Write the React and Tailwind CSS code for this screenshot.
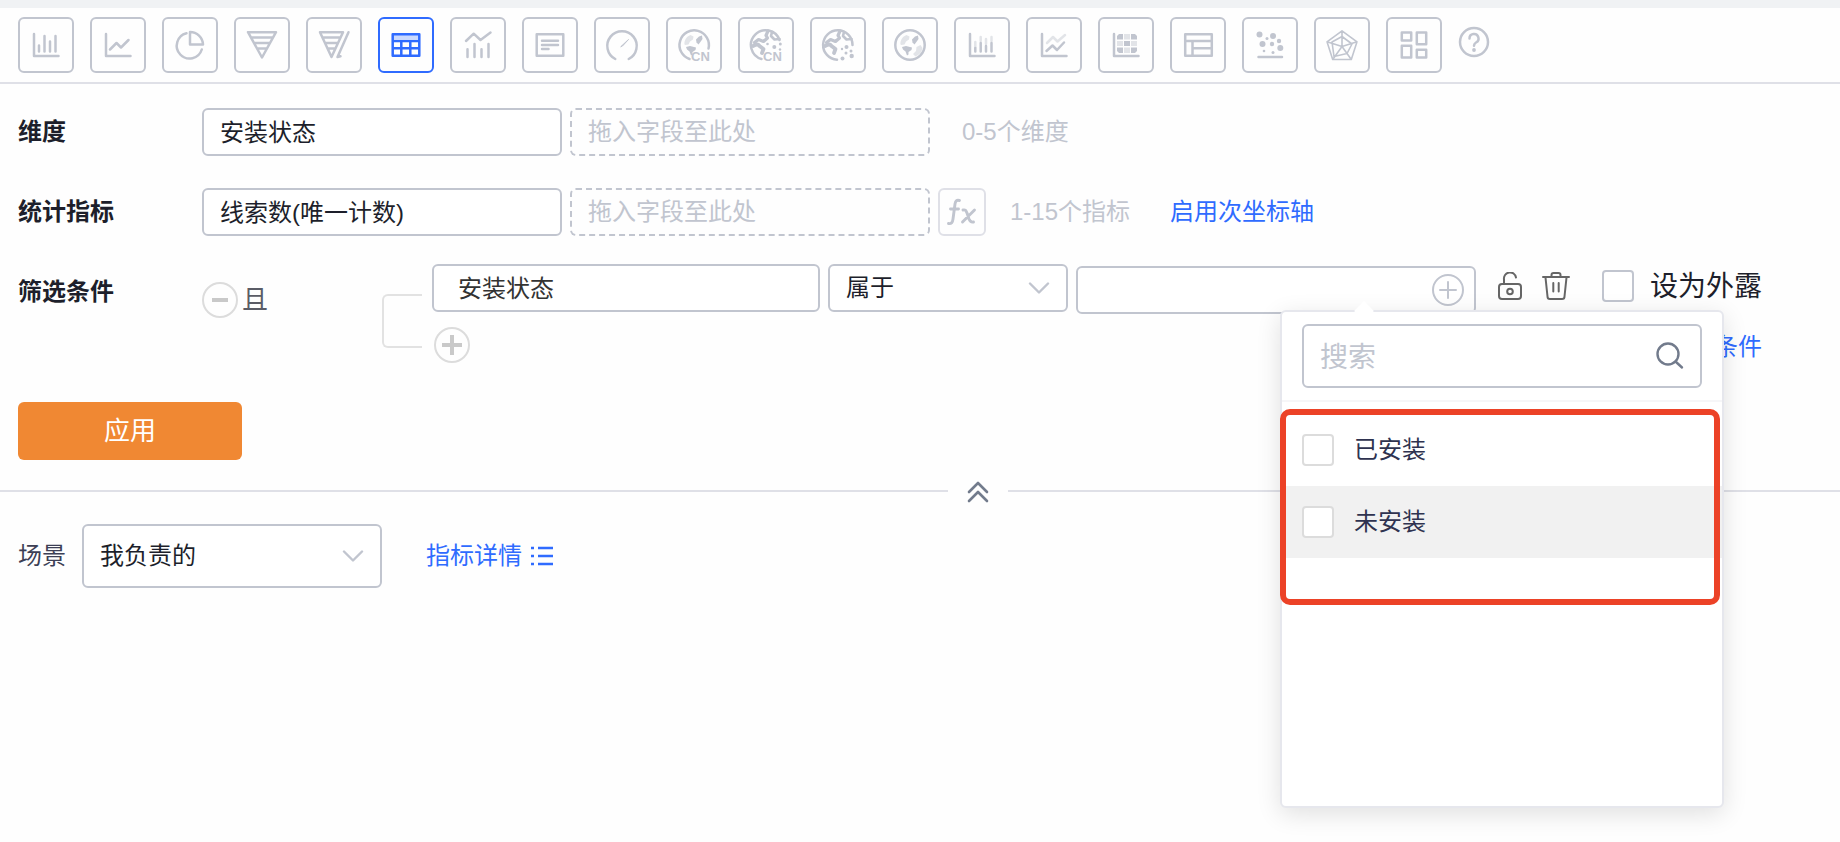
import React, { useState } from 'react';
import clsx from 'clsx';

const Axis = () => <path d="M16 17V39H40.5" />;

const CnLabel = () => (
  <text
    x="25"
    y="44"
    fontSize="13"
    fontWeight="700"
    fill="currentColor"
    stroke="none"
    fontFamily="Liberation Sans, Arial, sans-serif"
  >
    CN
  </text>
);

const Continents = () => (
  <g fill="currentColor" stroke="none">
    <path d="M18.5 27.5c-.5-4 2-8 6-9.5l3 1.5-.5 3-3 2-1.500 3-3 .5z" opacity=".45" />
    <path d="M30 22.500l3-3 3-1 .5 3.500-2.500 3.500-1.500 2-2-2z" />
    <path d="M20 30l4-1 6 1.500-.5 2.500-3 2v2.500l-1.500 1-1.500-4-2.500-2z" />
  </g>
);

const FracturedLand = () => (
  <>
    <path d="M30 14l-2 4.500 1.500 2.500-4 3.500-5-2-4 3" strokeWidth="3.200" />
    <path d="M15 29c4-2 5-2 6.500 0l4 3-1.500 4" strokeWidth="3.800" />
    <path d="M34 15l-1 4 3.500 3.500 5-.5" strokeWidth="2.600" />
  </>
);

const CHARTS = [
  {
    name: '柱状图',
    icon: (
      <>
        <Axis />
        <path d="M21 28.500v6M26.500 19v15.500M32 24.500v10M37.500 19v15.500" />
      </>
    ),
  },
  {
    name: '折线图',
    icon: (
      <>
        <Axis />
        <path d="M20 32.500l6.500-6.500 4.500 4.500 7.500-7.500" />
      </>
    ),
  },
  {
    name: '饼图',
    icon: (
      <>
        <path d="M24.500 16.300A12.800 12.800 0 1 0 39.800 32.500" />
        <path d="M28 15V27.500H41A13 13 0 0 0 28 15z" />
      </>
    ),
  },
  {
    name: '漏斗图',
    icon: <path d="M14 15.200H42L28 40.500zM17.500 20.500h21M20.500 26h15M23.500 31.500h9" />,
  },
  {
    name: '对比漏斗图',
    icon: (
      <path d="M14 15.200H37L25.500 40zM17 20.500h17M19.500 26h12M22 31.500h7M42.500 15.200L31.500 40l3-.7" />
    ),
  },
  {
    name: '表格',
    icon: (
      <>
        <path d="M15 17h26v5H15z" fill="currentColor" opacity=".25" stroke="none" />
        <path d="M14.700 17.300h26.600v21.400H14.700zM14.700 24h26.600M14.700 31.300h26.600M23.300 24v14.700M32.300 24v14.700" />
      </>
    ),
  },
  {
    name: '组合图',
    icon: (
      <path d="M16 24l7.700-7.300 6.800 6.300L40.500 15.500M17.500 32.300v7.700M24.500 27v13M31.500 32.300v7.700M38.500 27v13" />
    ),
  },
  {
    name: '指标卡',
    icon: <path d="M14.700 17.300h26.600v21.400H14.700zM20 23.700h16M20 28h16M20 32h6.500" />,
  },
  {
    name: '仪表盘',
    icon: (
      <>
        <path d="M21.300 42A14.700 14.700 0 1 1 34.700 42" />
        <path d="M27 29.500l7.500-7-5.800 6.300z" strokeWidth="1" fill="currentColor" />
      </>
    ),
  },
  {
    name: '中国地图',
    icon: (
      <>
        <path d="M23.500 42A14.700 14.700 0 1 1 42.500 31.500" />
        <Continents />
        <CnLabel />
      </>
    ),
  },
  {
    name: '中国气泡地图',
    icon: (
      <>
        <path d="M23.500 42A14.700 14.700 0 1 1 41.500 23" />
        <FracturedLand />
        <g fill="currentColor" stroke="none">
          <circle cx="36.300" cy="30" r="2" />
          <circle cx="42.300" cy="27" r="1.500" />
          <circle cx="29.500" cy="27" r="1.300" />
          <circle cx="42" cy="32.500" r="1.200" />
        </g>
        <CnLabel />
      </>
    ),
  },
  {
    name: '世界气泡地图',
    icon: (
      <>
        <path d="M27 42.700A14.700 14.700 0 1 1 42.500 28" />
        <FracturedLand />
        <g fill="currentColor" stroke="none">
          <circle cx="36.500" cy="30" r="2" />
          <circle cx="32" cy="32" r="1.200" />
          <circle cx="41" cy="34" r="1.500" />
          <circle cx="36" cy="36" r="1.500" />
          <circle cx="41.700" cy="39" r="2.200" />
          <circle cx="32.500" cy="41.500" r="2" />
        </g>
      </>
    ),
  },
  {
    name: '世界地图',
    icon: (
      <>
        <circle cx="28" cy="28" r="14.700" />
        <Continents />
        <path d="M31 37l3-3 .5-4 4-2 2 3c-.5 4-3 7-7 8.500z" fill="currentColor" opacity=".45" stroke="none" />
      </>
    ),
  },
  {
    name: '堆叠柱状图',
    icon: (
      <>
        <Axis />
        <path d="M21.300 31v3.500M26.700 26v8.500M32 29v5.500M37.500 26v8.500" />
        <path d="M21.300 25v5M26.700 20v4M32 22v5M37.500 20v4" opacity=".45" />
      </>
    ),
  },
  {
    name: '多折线图',
    icon: (
      <>
        <Axis />
        <path d="M20.500 34l6-5.500 4.500 4.500 7-7.500" />
        <path d="M21 26l6-6 4.500 4.500L39 18" opacity=".45" />
      </>
    ),
  },
  {
    name: '热力图',
    icon: (
      <>
        <Axis />
        <g fill="currentColor" stroke="none">
          <path d="M21 17h4v5.500h-6V19zM33 17h4l2 2v3.500h-6zM26 24h6v5h-6zM19 30.500h6V36h-4l-2-2zM33 30.500h6V34l-2 2h-4z" />
          <path d="M26 17h6v5.500h-6zM19 24h6v5h-6zM33 24h6v5h-6zM26 30.500h6V36h-6z" opacity=".45" />
        </g>
      </>
    ),
  },
  {
    name: '透视表',
    icon: (
      <path d="M15.200 17.300h26.600v21.400H15.200zM15.200 24h26.600M22.500 24v14.700M22.500 31.300h19.300" />
    ),
  },
  {
    name: '散点图',
    icon: (
      <>
        <path d="M16.500 40h23.500" />
        <g fill="currentColor" stroke="none">
          <circle cx="17.500" cy="17.500" r="3" />
          <circle cx="31" cy="19" r="3" />
          <circle cx="25" cy="21.500" r="1.500" />
          <circle cx="20.500" cy="27" r="3" />
          <circle cx="30" cy="27" r="2.200" />
          <circle cx="37" cy="24" r="2.200" />
          <circle cx="38.300" cy="31" r="3" />
          <circle cx="22" cy="34" r="1.300" />
          <circle cx="31" cy="35.500" r="1.500" />
        </g>
      </>
    ),
  },
  {
    name: '雷达图',
    icon: (
      <path
        d="M28 13.800L43 24.800 37.300 42.500H18.700L13 24.800zM28 19.500L38 27 33 36.500 20 39.500 18 25zM28 14v15.500M13 24.800l15 4.700M43 24.800l-15 4.700M18.700 42.500l9.300-13M37.300 42.500l-9.300-13"
        strokeWidth="1.600"
      />
    ),
  },
  {
    name: '更多图表',
    icon: (
      <path d="M15.800 15.500h9.400v8h-9.400zM30.800 15.500h9.400v11.700h-9.400zM15.800 28.800h9.400v11.700h-9.400zM30.800 32.800h9.400v7.700h-9.400z" />
    ),
  },
];

const OPTIONS = ['已安装', '未安装'];

const ChartButton = ({ name, active, onClick, children }) => (
  <button
    type="button"
    aria-label={name}
    aria-pressed={active}
    onClick={onClick}
    className={clsx(
      'flex size-14 shrink-0 items-center justify-center rounded-md border-2',
      active ? 'border-[#2f6bff] text-[#2f6bff]' : 'border-[#c1c5cf] text-[#c1c5cf]'
    )}
  >
    <svg
      className="size-12"
      viewBox="4 4 48 48"
      fill="none"
      stroke="currentColor"
      strokeWidth="2.500"
      strokeLinecap="round"
      strokeLinejoin="round"
    >
      {children}
    </svg>
  </button>
);

const DropZone = () => (
  <div className="flex h-12 w-[360px] items-center rounded-md border-2 border-dashed border-[#c1c5cf] px-4 text-[#c1c5cf]">
    拖入字段至此处
  </div>
);

const Chevron = () => (
  <svg
    className="pointer-events-none absolute top-1/2 right-4 h-3 w-6 -translate-y-1/2"
    viewBox="0 0 24 12"
    fill="none"
    stroke="#c1c5cf"
    strokeWidth="2.400"
    strokeLinecap="round"
    strokeLinejoin="round"
  >
    <path d="M2 1.500l9 9 9-9" />
  </svg>
);

const FIELD = 'rounded-md border-2 border-[#c1c5cf] bg-white outline-none';
const CHECKBOX = 'size-8 shrink-0 appearance-none rounded-sm border-2 bg-white checked:bg-[#2f6bff]';

export default function App() {
  const [chart, setChart] = useState('表格');
  const [hovered, setHovered] = useState('未安装');

  return (
    <div className="min-h-screen overflow-x-hidden bg-[#fefefe] font-['Liberation_Sans','Noto_Sans_CJK_SC',sans-serif] text-2xl leading-8 text-[#1d1f2b]">
      {/* Chart types */}
      <div className="flex gap-4 border-t-8 border-b-2 border-t-[#f0f2f4] border-b-[#dfe0e7] px-[18px] py-[9px]">
        {CHARTS.map(({ name, icon }) => (
          <ChartButton key={name} name={name} active={chart === name} onClick={() => setChart(name)}>
            {icon}
          </ChartButton>
        ))}
        <button type="button" aria-label="帮助" className="mt-[9px] h-8 text-[#c1c5cf]">
          <svg className="size-8" viewBox="0 0 32 32" fill="none" stroke="currentColor" strokeWidth="2.500" strokeLinecap="round">
            <circle cx="16" cy="16" r="14" />
            <path d="M11.500 12.500a4.500 4.500 0 1 1 6.500 4c-1.500.9-2 1.700-2 3.300" />
            <circle cx="16" cy="24" r="1.900" fill="currentColor" stroke="none" />
          </svg>
        </button>
      </div>

      {/* Query settings */}
      <div className="px-[18px] pt-6 whitespace-nowrap">
        <div className="flex items-center">
          <label htmlFor="dimension" className="w-46 font-bold">维度</label>
          <input id="dimension" className={clsx(FIELD, 'mr-2 h-12 w-[360px] px-4 pb-1')} defaultValue="安装状态" />
          <DropZone />
          <span className="ml-8 text-[#c1c5cf]">0-5个维度</span>
        </div>

        <div className="mt-8 flex items-center">
          <label htmlFor="metric" className="w-46 font-bold">统计指标</label>
          <input id="metric" className={clsx(FIELD, 'mr-2 h-12 w-[360px] px-4 pb-1')} defaultValue="线索数(唯一计数)" />
          <DropZone />
          <button
            type="button"
            aria-label="公式"
            className="ml-2 flex size-12 items-center justify-center rounded-md border-2 border-[#dfe0e7] text-[#c1c5cf]"
          >
            <svg className="size-8" viewBox="0 0 32 32" fill="none" stroke="currentColor" strokeWidth="2.900" strokeLinecap="round">
              <path d="M13.500 4.500c-3-.8-4 .5-4.500 3.500L7 23c-.5 3.500-1.500 5-4.500 4.500M4.500 13h8M17 14c2.500-.5 3 .5 4 3l2 6c1 2.500 2 3.500 4.500 3M28.500 14L16.500 26" />
            </svg>
          </button>
          <span className="ml-6 text-[#c1c5cf]">1-15个指标</span>
          <a href="#axis" className="ml-10 text-[#2f6bff]">启用次坐标轴</a>
        </div>

        <div className="mt-7 flex items-start">
          <div className="flex h-14 w-46 items-center font-bold">筛选条件</div>
          <div className="mt-[18px] flex w-45 items-center gap-1 text-[26px] text-[#5a5c66]">
            <button type="button" aria-label="移除条件组" className="flex size-9 items-center justify-center rounded-full border-2 border-[#dcdcdc]">
              <span className="h-1 w-4 bg-[#c9c9c9]" />
            </button>
            且
          </div>
          <div className="mt-[30px] h-[54px] w-10 rounded-l-md border-2 border-r-0 border-[#e2e2e2]" />

          <div className="ml-[10px]">
            <div className="flex items-start gap-2">
              <input aria-label="筛选字段" className={clsx(FIELD, 'h-12 w-[388px] px-6 pb-1 text-[#333]')} defaultValue="安装状态" />
              <div className="relative">
                <select aria-label="运算符" className={clsx(FIELD, 'h-12 w-60 appearance-none px-4')}>
                  <option>属于</option>
                  <option>不属于</option>
                </select>
                <Chevron />
              </div>

              <div className="relative mt-0.5">
                <div className={clsx(FIELD, 'flex h-12 w-[400px] items-center justify-end gap-2 px-[10px]')}>
                  <input aria-label="筛选值" className="min-w-0 flex-1 outline-none" />
                  <button type="button" aria-label="选择值">
                    <svg className="size-8" viewBox="0 0 32 32" fill="none" stroke="#c1c5cf" strokeWidth="2" strokeLinecap="round">
                      <circle cx="16" cy="16" r="15" />
                      <path d="M8 16h16M16 8v16" />
                    </svg>
                  </button>
                </div>

                {/* Value picker */}
                <div className="absolute top-11 left-[204px] z-10 h-[498px] w-[444px] rounded-md border-2 border-[#e6e7ed] bg-white shadow-[0_6px_24px_rgba(0,0,0,0.12)]">
                  <div className="absolute -top-2 left-[75px] size-[14px] rotate-45 bg-white" />
                  <div className="border-b-2 border-[#f6f6f8] px-5 py-3">
                    <div className={clsx(FIELD, 'relative flex h-16 items-center px-4')}>
                      <input
                        type="search"
                        aria-label="搜索"
                        placeholder="搜索"
                        className="min-w-0 flex-1 pt-1 text-[28px] outline-none placeholder:text-[#c1c5cf]"
                      />
                      <svg className="h-7 w-7" viewBox="0 0 28 28" fill="none" stroke="#727b8c" strokeWidth="2.400" strokeLinecap="round">
                        <circle cx="12" cy="12" r="10.500" />
                        <path d="M19.500 19.500l6.500 6" />
                      </svg>
                    </div>
                  </div>
                  <div className="pt-3">
                    {OPTIONS.map((option) => (
                      <label
                        key={option}
                        onMouseEnter={() => setHovered(option)}
                        className={clsx(
                          'flex h-18 items-center gap-5 px-5 text-[#2f3350]',
                          hovered === option && 'bg-[#f1f1f1]'
                        )}
                      >
                        <input type="checkbox" className={clsx(CHECKBOX, 'border-[#dcdcdc]')} />
                        {option}
                      </label>
                    ))}
                  </div>
                  <div className="pointer-events-none absolute top-[97px] -left-0.5 h-[196px] w-[440px] rounded-[10px] border-6 border-[#ec4227]" />
                </div>
              </div>

              <button type="button" aria-label="解锁" className="mt-2 ml-[14px]">
                <svg className="h-7 w-6" viewBox="0 0 24 28" fill="none" stroke="#666" strokeWidth="2" strokeLinecap="round">
                  <rect x="1" y="12" width="22" height="15" rx="3" />
                  <path d="M6 12V7.500a6 6 0 0 1 12-2" />
                  <circle cx="12" cy="19.500" r="2.800" />
                </svg>
              </button>
              <button type="button" aria-label="删除" className="mt-2 ml-3">
                <svg className="size-7" viewBox="0 0 28 28" fill="none" stroke="#666" strokeWidth="2" strokeLinecap="round" strokeLinejoin="round">
                  <path d="M1 5h26M9.500 4.500V3a2 2 0 0 1 2-2h5a2 2 0 0 1 2 2v1.500M3.500 5.500l2 19a2.500 2.500 0 0 0 2.500 2.500h12a2.500 2.500 0 0 0 2.500-2.500l2-19M11.300 11v8.500M16.700 11v8.500" />
                </svg>
              </button>
              <label className="mt-[5px] ml-6 flex items-center gap-4 text-[28px]">
                <input type="checkbox" className={clsx(CHECKBOX, 'border-[#c1c5cf]')} />
                <span className="pt-0.5">设为外露</span>
              </label>
            </div>

            <div className="mt-[13px] flex h-9 items-center justify-between">
              <button type="button" aria-label="新增" className="ml-0.5">
                <svg className="size-9" viewBox="0 0 36 36" fill="none">
                  <circle cx="18" cy="18" r="17" stroke="#dcdcdc" strokeWidth="2" />
                  <path d="M8 18h20M18 8v20" stroke="#c9c9c9" strokeWidth="4" />
                </svg>
              </button>
              <a href="#add" className="pt-1 text-[#2f6bff]">添加条件</a>
            </div>
          </div>
        </div>

        <button type="button" className="mt-[39px] h-[58px] w-56 rounded-md bg-[#f08833] text-[26px] text-white">
          应用
        </button>
      </div>

      {/* Collapse handle */}
      <div className="flex h-[62px] items-center">
        <div className="h-0.5 w-[948px] bg-[#dfe0e7]" />
        <button type="button" aria-label="收起" className="flex w-15 shrink-0 justify-center">
          <svg className="h-6 w-6" viewBox="0 0 24 24" fill="none" stroke="#727b8c" strokeWidth="2.600" strokeLinecap="round" strokeLinejoin="round">
            <path d="M3 13l9-9 9 9M3 22l9-9 9 9" />
          </svg>
        </button>
        <div className="h-0.5 flex-1 bg-[#dfe0e7]" />
      </div>

      {/* Scene */}
      <div className="flex items-center px-[18px] pt-0.5">
        <label htmlFor="scene" className="mr-4 text-[#3c3f55]">场景</label>
        <div className="relative">
          <select id="scene" className={clsx(FIELD, 'h-16 w-75 appearance-none px-4')}>
            <option>我负责的</option>
            <option>全部</option>
          </select>
          <Chevron />
        </div>
        <a href="#metrics" className="ml-11 flex items-center gap-2 text-[#2f6bff]">
          指标详情
          <svg className="h-5 w-6" viewBox="0 0 24 20" fill="none" stroke="currentColor" strokeWidth="2.400">
            <path d="M1 2h3M8 2h15M1 10h3M8 10h15M1 18h3M8 18h15" />
          </svg>
        </a>
      </div>
    </div>
  );
}
